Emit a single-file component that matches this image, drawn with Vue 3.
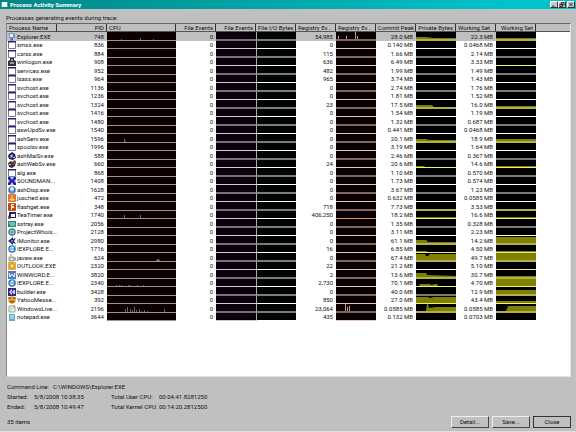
<template>
  <main class="window">
    <header class="titlebar">
      <svg class="app-icon" viewBox="0 0 8 7">
        <path d="M0 0h8v7H0z" fill="#e8fafa" />
        <path d="M1 2h6v4H1z" fill="#fff" />
      </svg>
      <h1>Process Activity Summary</h1>
      <div class="window-buttons">
        <button type="button" aria-label="Minimize">
          <svg viewBox="0 0 7 6"><path d="M1 5h3" /></svg>
        </button>
        <button type="button" aria-label="Restore">
          <svg viewBox="0 0 7 6"><path d="M3 .5h3v3H3zM1 2.500h3v3H1z" /></svg>
        </button>
        <button type="button" aria-label="Close window" class="gap">
          <svg viewBox="0 0 7 6"><path d="M1.500 1l4 4M5.500 1l-4 4" /></svg>
        </button>
      </div>
    </header>

    <section class="content">
      <p class="caption">Processes generating events during trace:</p>
      <div class="list">
        <table>
          <colgroup>
            <col v-for="(col, i) in columns" :key="i" :class="col.size" />
            <col />
          </colgroup>
          <thead>
            <tr>
              <th v-for="(col, i) in columns" :key="i" :class="col.align">{{ col.label }}</th>
              <th class="rest"></th>
            </tr>
          </thead>
          <tbody>
            <tr v-for="(row, i) in rows" :key="row.pid" :class="{ selected: i === 0 }">
              <td class="name">
                <div>
                  <svg class="icon" viewBox="0 0 8 8" v-html="icons[row.icon]"></svg>
                  <span>{{ row.name }}</span>
                </div>
              </td>
              <td>{{ row.pid }}</td>
              <td class="graph cpu">
                <svg viewBox="0 0 69 7" preserveAspectRatio="none">
                  <path :d="spikes(row.cpu)" />
                </svg>
              </td>
              <td>0</td>
              <td class="graph files"><svg viewBox="0 0 40 7"></svg></td>
              <td class="graph io"><svg viewBox="0 0 40 7"></svg></td>
              <td>{{ row.reg }}</td>
              <td class="graph registry" :class="{ hot: row.pid === 1740 }">
                <svg viewBox="0 0 40 7" preserveAspectRatio="none">
                  <path :d="spikes(row.regGraph)" />
                </svg>
              </td>
              <td>{{ row.commit }} MB</td>
              <td class="graph memory" :class="{ used: row.priv }">
                <svg viewBox="0 0 40 7" preserveAspectRatio="none">
                  <path :d="area(row.priv)" />
                </svg>
              </td>
              <td>{{ row.ws }} MB</td>
              <td class="graph memory" :class="{ used: row.wsGraph }">
                <svg viewBox="0 0 40 7" preserveAspectRatio="none">
                  <path :d="area(row.wsGraph)" />
                </svg>
              </td>
              <td class="rest"></td>
            </tr>
          </tbody>
        </table>
      </div>

      <dl class="command">
        <dt>Command Line:</dt>
        <dd>C:\WINDOWS\Explorer.EXE</dd>
      </dl>
      <dl class="details">
        <dt>Started:</dt>
        <dd>5/8/2008 10:38:35</dd>
        <dt>Total User CPU:</dt>
        <dd>00:04:41.8281250</dd>
        <dt>Ended:</dt>
        <dd>5/8/2008 10:49:47</dd>
        <dt>Total Kernel CPU:</dt>
        <dd>00:14:20.2812500</dd>
      </dl>
      <footer>
        <p>35 items</p>
        <div class="actions">
          <button type="button">Detail...</button>
          <button type="button">Save...</button>
          <button type="button" class="default">Close</button>
        </div>
      </footer>
    </section>
  </main>
</template>

<script setup>
const columns = [
  { label: 'Process Name', align: 'left', size: 'w-name' },
  { label: 'PID', align: 'right', size: 'w-name' },
  { label: 'CPU', align: 'left', size: 'w-cpu' },
  { label: 'File Events', align: 'right', size: 'w-cell' },
  { label: 'File Events', align: 'right', size: 'w-cell' },
  { label: 'File I/O Bytes', align: 'right', size: 'w-cell' },
  { label: 'Registry Ev...', align: 'left', size: 'w-cell' },
  { label: 'Registry Ev...', align: 'left', size: 'w-cell' },
  { label: 'Commit Peak', align: 'right', size: 'w-cell' },
  { label: 'Private Bytes', align: 'right', size: 'w-cell' },
  { label: 'Working Set', align: 'left', size: 'w-cell' },
  { label: 'Working Set', align: 'right', size: 'w-cell' },
];

// graph points are [x, height] pairs, spikes are single pixel bars
const flat = (h) => [[0, h], [40, h]];

const rows = [
  { name: 'Explorer.EXE', icon: 'explorer', pid: 748, reg: '54,985', commit: '28.0', ws: '22.3', cpu: [[14, 1], [33, 2], [46, 1]], regGraph: [[2, 3], [10, 3], [19, 7], [21, 3]], priv: [[0, 2], [10, 2], [18, 1], [40, 1]], wsGraph: flat(1) },
  { name: 'smss.exe', icon: 'app', pid: 836, reg: '0', commit: '0.140', ws: '0.0468' },
  { name: 'csrss.exe', icon: 'app', pid: 884, reg: '115', commit: '1.66', ws: '2.14' },
  { name: 'winlogon.exe', icon: 'lock', pid: 908, reg: '636', commit: '6.49', ws: '3.33', wsGraph: flat(0) },
  { name: 'services.exe', icon: 'app', pid: 952, reg: '482', commit: '1.99', ws: '1.49' },
  { name: 'lsass.exe', icon: 'app', pid: 964, reg: '965', commit: '3.74', ws: '1.43' },
  { name: 'svchost.exe', icon: 'app', pid: 1136, reg: '0', commit: '2.74', ws: '1.76' },
  { name: 'svchost.exe', icon: 'app', pid: 1236, reg: '0', commit: '1.81', ws: '1.52' },
  { name: 'svchost.exe', icon: 'app', pid: 1324, reg: '23', commit: '17.5', ws: '16.0', priv: [[0, 2], [16, 2], [18, 0], [40, 0]], wsGraph: flat(1) },
  { name: 'svchost.exe', icon: 'app', pid: 1416, reg: '0', commit: '1.54', ws: '1.19' },
  { name: 'svchost.exe', icon: 'app', pid: 1480, reg: '0', commit: '1.32', ws: '0.687' },
  { name: 'aswUpdSv.exe', icon: 'app', pid: 1540, reg: '0', commit: '0.441', ws: '0.0468' },
  { name: 'ashServ.exe', icon: 'app', pid: 1596, reg: '0', commit: '20.1', ws: '18.9', cpu: [[17, 3], [18, 1]], priv: [[0, 2], [10, 2], [13, 1], [40, 1]], wsGraph: flat(2) },
  { name: 'spoolsv.exe', icon: 'app', pid: 1996, reg: '0', commit: '3.19', ws: '1.64' },
  { name: 'ashMaiSv.exe', icon: 'mail', pid: 588, reg: '0', commit: '2.46', ws: '0.367' },
  { name: 'ashWebSv.exe', icon: 'web', pid: 660, reg: '24', commit: '20.6', ws: '14.6', priv: [[0, 1], [8, 1], [9, 0], [40, 0]], wsGraph: flat(1) },
  { name: 'alg.exe', icon: 'app', pid: 868, reg: '0', commit: '1.10', ws: '0.570' },
  { name: 'SOUNDMAN...', icon: 'sound', pid: 1408, reg: '0', commit: '1.73', ws: '0.574' },
  { name: 'ashDisp.exe', icon: 'ball', pid: 1628, reg: '0', commit: '3.67', ws: '1.23' },
  { name: 'jusched.exe', icon: 'java', pid: 472, reg: '0', commit: '0.632', ws: '0.0585' },
  { name: 'flashget.exe', icon: 'flash', pid: 348, reg: '718', commit: '7.73', ws: '3.53', priv: flat(0), wsGraph: flat(0) },
  { name: 'TeaTimer.exe', icon: 'tea', pid: 1740, reg: '406,250', commit: '18.2', ws: '16.6', cpu: [[17, 3], [33, 3]], priv: flat(1), wsGraph: flat(1) },
  { name: 'sstray.exe', icon: 'tray', pid: 2056, reg: '0', commit: '1.35', ws: '0.328' },
  { name: 'ProjectWhois...', icon: 'gear', pid: 2128, reg: '0', commit: '3.11', ws: '2.23' },
  { name: 'iMonitor.exe', icon: 'knot', pid: 2980, reg: '0', commit: '61.1', ws: '14.2', priv: [[0, 3], [10, 3], [12, 1], [40, 1]], wsGraph: flat(6) },
  { name: 'IEXPLORE.E...', icon: 'ie', pid: 1716, reg: '16', commit: '6.85', ws: '4.50', priv: [[0, 1], [10, 1], [12, 0], [40, 0]], wsGraph: flat(1) },
  { name: 'javaw.exe', icon: 'cup', pid: 624, reg: '0', commit: '67.4', ws: '49.7', cpu: [[49, 1], [50, 2], [51, 2], [52, 1]], priv: [[0, 6], [9, 6], [10, 4], [12, 4], [14, 6], [40, 6]], wsGraph: flat(7) },
  { name: 'OUTLOOK.EXE', icon: 'outlook', pid: 2320, reg: '22', commit: '21.2', ws: '5.10', wsGraph: flat(0) },
  { name: 'WINWORD.E...', icon: 'word', pid: 3820, reg: '2', commit: '13.6', ws: '30.7', priv: [[0, 4], [10, 4], [11, 2], [40, 1]], wsGraph: flat(1) },
  { name: 'IEXPLORE.E...', icon: 'ie', pid: 2340, reg: '2,730', commit: '70.1', ws: '4.70', cpu: [[9, 1], [12, 1], [14, 1], [21, 1], [23, 1], [30, 1], [36, 1]], priv: [[0, 0], [3, 0], [4, 2], [14, 2], [15, 1], [19, 2], [21, 2], [22, 0], [40, 0]], wsGraph: flat(7) },
  { name: 'builder.exe', icon: 'builder', pid: 3428, reg: '0', commit: '40.0', ws: '12.9', wsGraph: flat(4) },
  { name: 'YahooMesse...', icon: 'smiley', pid: 392, reg: '850', commit: '27.0', ws: '43.4', priv: [[0, 6], [12, 6], [14, 5], [18, 6], [40, 6]], wsGraph: flat(2) },
  { name: 'WindowsLive...', icon: 'live', pid: 2196, reg: '23,064', commit: '0.0585', ws: '0.0585', cpu: [[18, 3], [20, 5], [23, 3], [25, 2], [27, 5], [29, 2], [32, 3], [34, 1], [37, 2], [40, 1], [57, 3]], regGraph: [[9, 7], [11, 4], [13, 5]], priv: [[0, 0], [10, 0], [11, 7], [12, 7], [13, 3], [20, 4], [40, 4]], wsGraph: [[0, 0], [10, 0], [12, 5], [40, 5]] },
  { name: 'notepad.exe', icon: 'notepad', pid: 3644, reg: '435', commit: '0.132', ws: '0.0703' },
];

const icons = {
  app: '<path d="M.5 .5h7v7h-7z" fill="#fff" stroke="#777798"/><path d="M0 0h8v1.500H0z" fill="#26266e"/>',
  explorer: '<path d="M1 0h5l1 1v4H5v3H2V5H1z" fill="#7897c2"/><path d="M2 1h3v3H2z" fill="#e4f0fb"/><path d="M3 5h2v2H3z" fill="#4773b0"/>',
  lock: '<path d="M2 0h4v2l2 1v5H0V3l2-1z" fill="#32323c"/><path d="M3 1h2v2H3zM2 4h4v2H2z" fill="#9a9aa6"/>',
  mail: '<path d="M1 2l3-2 3 2 1 4-3 2-4-1-1-3z" fill="#23235f"/><path d="M2 4l2-2 1 2-2 2zM5 5h2v1H5z" fill="#c3c8ec"/>',
  web: '<path d="M0 3l3-2 1 1 3-2 1 2-1 4-3 2-3-1z" fill="#37343c"/><path d="M4 3l3-2v2L5 5z" fill="#a7444a"/><path d="M1 4h2v1H1z" fill="#ccc"/>',
  sound: '<path d="M0 0h8v8H0z" fill="#20209a"/><path d="M2 0h4L4 3zM8 2v4L6 4zM2 8l2-3 2 3zM0 2l2 2-2 2z" fill="#c9c9f2"/>',
  ball: '<circle cx="4" cy="4" r="3.800" fill="#3a78ae"/><circle cx="4" cy="3" r="2" fill="#d9ecf8"/><path d="M2 6h4" stroke="#86b8dc"/>',
  java: '<rect width="8" height="8" rx="1" fill="#d9782c"/><path d="M2 5h4v1H2zM4 1v3" stroke="#f7dab7" fill="none"/>',
  flash: '<rect width="8" height="8" rx="1" fill="#c14c12"/><path d="M3 1h3v1H4v1h2v2H4v2H3z" fill="#fff0d0"/>',
  tea: '<path d="M1 1h7v6H1z" fill="#23236d"/><path d="M3 3h4v3H3z" fill="#fff"/><path d="M0 4l3 4H0z" fill="#b64545"/>',
  tray: '<path d="M0 1h8v6H0z" fill="#238a77"/><path d="M1 3h6M2 5h5" stroke="#c5f0e4"/>',
  gear: '<circle cx="4" cy="4" r="3" fill="#e0f1f1" stroke="#3c8491" stroke-width="1.500"/><path d="M4 2v4M2 4h4" stroke="#3c8491"/>',
  knot: '<path d="M0 4l5-4v2l3-1-2 3 2 3-3-1v2z" fill="#2c2687"/><path d="M3 4h2" stroke="#ccc"/>',
  ie: '<circle cx="4" cy="4" r="3" fill="none" stroke="#2878b8" stroke-width="1.600"/><path d="M2 4h5" stroke="#2878b8"/><path d="M0 6q3-6 8-5" fill="none" stroke="#83c0df"/>',
  cup: '<path d="M1 3h5v4H1z" fill="#d6dccf" stroke="#87928c"/><path d="M6 4h2v2H6M3 0v2" fill="none" stroke="#9b8a7c"/>',
  outlook: '<rect width="8" height="8" fill="#eaaf3e"/><circle cx="4" cy="4" r="2.200" fill="#fff0c4" stroke="#c87f1b"/>',
  word: '<path d="M0 0h8v8H0z" fill="#5878b8"/><path d="M1 2l1 4 2-3 2 3 1-4" fill="none" stroke="#fff"/>',
  builder: '<path d="M0 0h8v8H0z" fill="#352a83"/><path d="M1 4l3-3v2l3-1v4L4 5v2z" fill="#e3dff4"/><path d="M3 4h2" stroke="#352a83"/>',
  smiley: '<circle cx="4" cy="4" r="3.800" fill="#e4a420"/><path d="M0 2h3M5 2h3" stroke="#5b4222"/><path d="M1 5h6L4 7z" fill="#963d22"/>',
  live: '<path d="M1 1h6v6H1z" fill="#eef5ee" stroke="#8dad9e"/><path d="M2 2h2v4H2z" fill="#c5e0cc"/><path d="M6 0v4" stroke="#cc8b61"/>',
  notepad: '<path d="M1 1h5l1 1v6H1z" fill="#5ba9cd"/><path d="M2 3h4M2 5h4" stroke="#e1f5fc"/>',
};

function spikes(points = []) {
  return points.map(([x, h]) => `M${x} 7v${-h}h1v${h}z`).join('');
}

function area(points) {
  if (!points) return '';
  return `M0 7${points.map(([x, h]) => `L${x} ${7 - h}`).join('')}L40 7z`;
}
</script>

<style>
body {
  background: #c0c0c0;
}
</style>

<style scoped>
* {
  box-sizing: border-box;
}

.window {
  display: flex;
  flex-direction: column;
  min-height: 100vh;
  background: #c0c0c0;
  border-bottom: 1px solid #dedede;
  color: #111;
  font: 6px/8px Roboto, "Liberation Sans", sans-serif;
}

.titlebar {
  display: flex;
  align-items: center;
  gap: 2px;
  height: 9px;
  padding: 0 1px;
  background: linear-gradient(to right, #008684, #00c4cc 90%);
}

h1,
p,
dl,
dd {
  margin: 0;
}

h1 {
  flex: 1;
  color: #fff;
  font-size: 6px;
  font-weight: bold;
}

.app-icon {
  width: 7px;
  height: 5px;
}

.window-buttons {
  display: flex;
}

.window-buttons button {
  width: 8px;
  height: 7px;
  padding: 0;
  background: #c8c8c8;
  border: 1px solid;
  border-color: #fff #333 #333 #fff;
}

.window-buttons .gap {
  margin-left: 1px;
}

.window-buttons svg {
  display: block;
  width: 6px;
  height: 5px;
  fill: none;
  stroke: #111;
}

.content {
  display: flex;
  flex: 1;
  flex-direction: column;
  padding: 5px 5px 3px 6px;
}

.caption {
  height: 9px;
}

.list {
  flex: 1;
  background: #fff;
  border: 1px solid;
  border-color: #666 #e4e4e4 #e4e4e4 #888;
}

table {
  width: 100%;
  table-layout: fixed;
  border-spacing: 0;
}

.w-name {
  width: 50px;
}

.w-cpu {
  width: 69px;
}

.w-cell {
  width: 40px;
}

th {
  height: 8px;
  padding: 0 2px;
  overflow: hidden;
  background: #c0c0c0;
  border-right: 1px solid #333;
  border-bottom: 1px solid #555;
  font-weight: normal;
  line-height: 7px;
  white-space: nowrap;
}

th.left {
  text-align: left;
}

th.right {
  text-align: right;
}

th.rest {
  border-right: 0;
}

td {
  padding: 0 3px;
  overflow: hidden;
  line-height: 8px;
  text-align: right;
  white-space: nowrap;
}

.name {
  padding: 0 0 0 1px;
}

.name div {
  display: flex;
  gap: 1px;
}

.icon {
  flex: none;
  width: 8px;
  height: 8px;
}

.selected td:not(.graph, .rest) {
  background: #c0c0c0;
}

.graph {
  padding: 0;
  background: #000;
  border-bottom: 1px solid #fff;
}

tr:nth-child(odd) .graph {
  border-bottom: 2px solid #7c7c7c;
}

.graph svg {
  display: block;
  width: 100%;
  height: 7px;
}

.cpu {
  background: #0c0000;
}

tr .graph.cpu {
  border-bottom-color: #a88f8f;
}

tr:nth-child(odd) .graph.cpu {
  background: #0c0000;
  border-bottom-width: 1px;
}

.cpu path {
  fill: #6f6848;
}

.files {
  background: #090009;
}

tr:nth-child(even) .files {
  border-bottom-color: #d4c8d4;
}

tr:nth-child(odd) .graph.files {
  border-bottom-color: #806c80;
}

.io {
  background: #000402;
  border-left: 1px solid #aaa;
}

.registry {
  background: #0b0000;
}

tr:nth-child(even) .registry {
  border-bottom-color: #e4c8c4;
}

tr:nth-child(odd) .graph.registry {
  border-bottom-color: #806662;
}

.registry path {
  fill: #d29a74;
}

tr:nth-child(even) .graph.hot {
  border-bottom-color: #e08c5c;
}

.memory path {
  fill: #808000;
}

tr:nth-child(even) .graph.used {
  border-bottom-color: #f0f07c;
}

tr:nth-child(odd) .graph.used {
  border-bottom-color: #b0b050;
}

.command {
  display: flex;
  gap: 4px;
  padding: 6px 1px 2px;
}

.details {
  display: grid;
  grid-template-columns: 27px 77px 48px auto;
  row-gap: 2px;
  padding: 0 1px;
  white-space: nowrap;
}

footer {
  display: flex;
  align-items: center;
  justify-content: space-between;
  padding: 5px 0 0 1px;
}

.actions {
  display: flex;
  gap: 3px;
}

.actions button {
  width: 38px;
  height: 12px;
  padding: 0;
  background: #c0c0c0;
  border: 1px solid;
  border-color: #eee #444 #444 #eee;
  color: #111;
  font: inherit;
}

.actions .default {
  border-color: #333;
}
</style>
